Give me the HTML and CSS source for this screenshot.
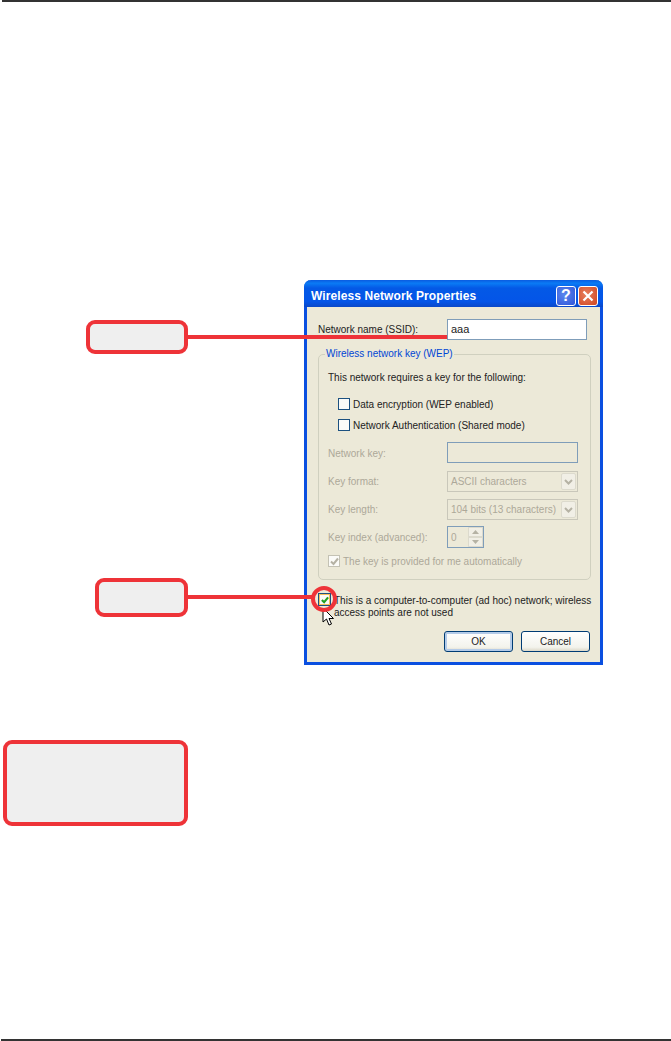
FILE: index.html
```html
<!DOCTYPE html>
<html lang="en">
<head>
    <meta charset="UTF-8">
    <meta name="viewport" content="width=device-width, initial-scale=1.0">
    <title>Wireless Network Properties</title>
    <link rel="stylesheet" href="styles.css">
</head>
<body>
    <div class="page">
        <div class="rule rule-top"></div>

        <div class="figure">
            <div class="callouts">
                <div class="callout callout-ssid"></div>
                <div class="callout callout-adhoc"></div>
            </div>

            <div class="dialog">
                <div class="titlebar">
                    <span class="title">Wireless Network Properties</span>
                    <span class="title-btn help">?</span>
                    <span class="title-btn close">
                        <svg width="12" height="12" viewBox="0 0 12 12"><path d="M1.5 1.5 L10.5 10.5 M10.5 1.5 L1.5 10.5" stroke="#fff" stroke-width="2.2" fill="none"/></svg>
                    </span>
                </div>
                <div class="dialog-body">
                    <div class="ssid-row">
                        <span>Network name (SSID):</span>
                        <span class="textbox">aaa</span>
                    </div>

                    <fieldset class="group">
                        <legend>Wireless network key (WEP)</legend>
                        <div class="line">This network requires a key for the following:</div>
                        <div class="check-row first">
                            <span class="check"></span>
                            <span>Data encryption (WEP enabled)</span>
                        </div>
                        <div class="check-row second">
                            <span class="check"></span>
                            <span>Network Authentication (Shared mode)</span>
                        </div>

                        <div class="field field-key">
                            <span class="field-label">Network key:</span>
                            <span class="textbox off"></span>
                        </div>
                        <div class="field field-format">
                            <span>Key format:</span>
                            <span class="select">ASCII characters<span class="arrow"><svg width="9" height="6" viewBox="0 0 9 6"><path d="M1 1 L4.5 4.5 L8 1" stroke="#b5b2a4" stroke-width="2" fill="none"/></svg></span></span>
                        </div>
                        <div class="field field-length">
                            <span>Key length:</span>
                            <span class="select">104 bits (13 characters)<span class="arrow"><svg width="9" height="6" viewBox="0 0 9 6"><path d="M1 1 L4.5 4.5 L8 1" stroke="#b5b2a4" stroke-width="2" fill="none"/></svg></span></span>
                        </div>
                        <div class="field field-index">
                            <span>Key index (advanced):</span>
                            <span class="spin">0
                                <span class="spin-btns">
                                    <span class="spin-btn"><svg width="7" height="4" viewBox="0 0 7 4"><path d="M0 4 L3.5 0 L7 4 Z" fill="#b5b2a4"/></svg></span>
                                    <span class="spin-btn"><svg width="7" height="4" viewBox="0 0 7 4"><path d="M0 0 L3.5 4 L7 0 Z" fill="#b5b2a4"/></svg></span>
                                </span>
                            </span>
                        </div>
                        <div class="check-row auto">
                            <span class="check off"><svg width="9" height="9" viewBox="0 0 9 9"><path d="M1 4.5 L3.5 7 L8 1.5" stroke="#b5b2a4" stroke-width="2" fill="none"/></svg></span>
                            <span>The key is provided for me automatically</span>
                        </div>
                    </fieldset>

                    <div class="adhoc-row">
                        <span class="check hover"><svg width="8" height="8" viewBox="0 0 9 9"><path d="M1 4.5 L3.5 7 L8 1.5" stroke="#21a121" stroke-width="2.4" fill="none"/></svg></span>
                        <span class="adhoc-text">This is a computer-to-computer (ad hoc) network; wireless<br>access points are not used</span>
                    </div>

                    <div class="buttons">
                        <span class="btn default">OK</span>
                        <span class="btn">Cancel</span>
                    </div>
                </div>
            </div>

            <div class="connector connector-ssid"></div>
            <div class="connector connector-adhoc"></div>
            <svg class="pointer" width="13" height="19" viewBox="0 0 13 19"><path d="M1 1 L1 15 L4.5 12 L7 18 L9.5 17 L7 11.5 L11.5 11.5 Z" fill="#fff" stroke="#000" stroke-width="1"/></svg>
            <div class="ring"></div>
        </div>

        <div class="callout note"></div>

        <div class="rule rule-bottom"></div>
    </div>
</body>
</html>
```

FILE: styles.css
```css
body {
    margin: 0;
    padding: 0;
    background-color: #fff;
    font-family: 'Liberation Sans', Arial, sans-serif;
    font-size: 10px;
    color: #222;
}

.page {
    display: flex;
    flex-direction: column;
    height: 1041px;
    overflow: hidden;
}

.rule {
    height: 2px;
    background-color: #333;
}

.rule-top {
    margin-left: 2px;
}

.rule-bottom {
    margin-top: auto;
    margin-left: 1px;
}

/* figure: callouts on the left, dialog on the right */
.figure {
    position: relative;
    display: flex;
    margin-top: 278px;
}

.callouts {
    display: flex;
    flex-direction: column;
    align-items: flex-end;
    width: 188px;
}

.callout {
    box-sizing: border-box;
    background-color: #efefef;
    border: 4px solid #ee3338;
    border-radius: 9px;
}

.callout-ssid {
    width: 102px;
    height: 34px;
    margin-top: 40px;
}

.callout-adhoc {
    width: 93px;
    height: 39px;
    margin-top: 224px;
}

.note {
    width: 185px;
    height: 86px;
    margin-top: 75px;
    margin-left: 3px;
}

.connector {
    position: absolute;
    left: 187px;
    height: 4px;
    background-color: #ee3338;
}

.connector-ssid {
    top: 55px;
    width: 260px;
}

.connector-adhoc {
    top: 315px;
    width: 125px;
}

.ring {
    position: absolute;
    left: 311px;
    top: 306px;
    box-sizing: border-box;
    width: 26px;
    height: 26px;
    border: 4px solid #ee3338;
    border-radius: 50%;
}

.pointer {
    position: absolute;
    left: 322px;
    top: 327px;
}

/* xp style window */
.dialog {
    box-sizing: border-box;
    width: 299px;
    margin-left: 116px;
    background-color: #ece9d8;
    border: 3px solid #0a4fe0;
    border-top: none;
    border-radius: 7px 7px 0 0;
}

.titlebar {
    box-sizing: border-box;
    display: flex;
    align-items: center;
    height: 27px;
    margin: 0 -3px;
    padding: 4px 5px 0 7px;
    border-radius: 7px 7px 0 0;
    background: linear-gradient(to bottom, #0a5be0 0%, #0a7bf5 12%, #0459e6 30%, #0455e8 80%, #0a48c8 100%);
}

.title {
    flex: 1;
    font-size: 12px;
    letter-spacing: 0.1px;
    font-weight: bold;
    color: #fff;
}

.title-btn {
    box-sizing: border-box;
    display: flex;
    align-items: center;
    justify-content: center;
    width: 20px;
    height: 20px;
    border: 1px solid #fff;
    border-radius: 3px;
    color: #fff;
    font-size: 16px;
    font-weight: bold;
}

.help {
    margin-right: 2px;
    background: radial-gradient(circle at 40% 40%, #5a86ee, #2f55d8);
}

.close {
    background: radial-gradient(circle at 40% 40%, #e8805e, #cf4420);
}

.dialog-body {
    padding: 12px 9px 10px 11px;
}

.ssid-row {
    display: grid;
    grid-template-columns: 129px 140px;
    align-items: center;
    height: 21px;
}

.textbox {
    box-sizing: border-box;
    display: block;
    height: 21px;
    padding: 0 3px;
    line-height: 19px;
    font-size: 11px;
    background-color: #fff;
    border: 1px solid #7f9db9;
}

.textbox.off {
    background-color: #ece9d8;
}

.group {
    margin: 7px 0 0;
    padding: 10px 12px 11px 9px;
    border: 1px solid #d0d0bf;
    border-radius: 5px;
}

.group legend {
    margin-left: -3px;
    padding: 0 1px;
    line-height: 14px;
    color: #0046d5;
}

.line {
    line-height: 14px;
}

.check-row {
    display: flex;
    align-items: center;
    gap: 3px;
    height: 14px;
}

.check-row.first {
    margin-top: 12px;
    margin-left: 10px;
}

.check-row.second {
    margin-top: 7px;
    margin-left: 10px;
}

.check-row.auto {
    margin-top: 6px;
    color: #aca899;
}

.check {
    box-sizing: border-box;
    display: flex;
    align-items: center;
    justify-content: center;
    flex: none;
    width: 12px;
    height: 12px;
    background-color: #fbfbf8;
    border: 1px solid #1c5180;
}

.check.off {
    border-color: #c4c2b4;
}

.check.hover {
    width: 13px;
    height: 13px;
    box-shadow: inset 0 0 0 1px #f8c05a;
}

.field {
    display: grid;
    grid-template-columns: 119px 131px;
    align-items: center;
    color: #aca899;
}

.field-key {
    margin-top: 10px;
}

.field-label {
    padding-top: 2px;
}

.field-format {
    margin-top: 8px;
}

.field-length {
    margin-top: 7px;
}

.field-index {
    margin-top: 6px;
}

.select {
    box-sizing: border-box;
    display: flex;
    align-items: center;
    justify-content: space-between;
    height: 21px;
    padding: 0 1px 0 3px;
    border: 1px solid #c9c7ba;
}

.arrow {
    display: flex;
    align-items: center;
    justify-content: center;
    width: 15px;
    height: 17px;
    background-color: #f1efe6;
    border: 1px solid #dcdacd;
    border-radius: 2px;
    box-sizing: border-box;
}

.spin {
    box-sizing: border-box;
    display: flex;
    align-items: center;
    justify-content: space-between;
    width: 37px;
    height: 22px;
    padding-left: 3px;
    border: 1px solid #7f9db9;
}

.spin-btns {
    display: flex;
    flex-direction: column;
    width: 15px;
    height: 20px;
}

.spin-btn {
    display: flex;
    flex: 1;
    align-items: center;
    justify-content: center;
    background-color: #f1efe6;
    border: 1px solid #dcdacd;
}

.adhoc-row {
    display: flex;
    gap: 3px;
    margin-top: 13px;
}

.adhoc-text {
    line-height: 12px;
    padding-top: 2px;
    white-space: nowrap;
}

.buttons {
    display: flex;
    justify-content: flex-end;
    gap: 8px;
    margin-top: 12px;
    margin-right: 1px;
}

.btn {
    box-sizing: border-box;
    width: 69px;
    height: 21px;
    line-height: 19px;
    text-align: center;
    background: linear-gradient(to bottom, #fff 0%, #f3f3ec 80%, #dcd8c8 100%);
    border: 1px solid #003c74;
    border-radius: 3px;
}

.btn.default {
    box-shadow: inset 0 0 0 2px #b4cbe8;
}
```
